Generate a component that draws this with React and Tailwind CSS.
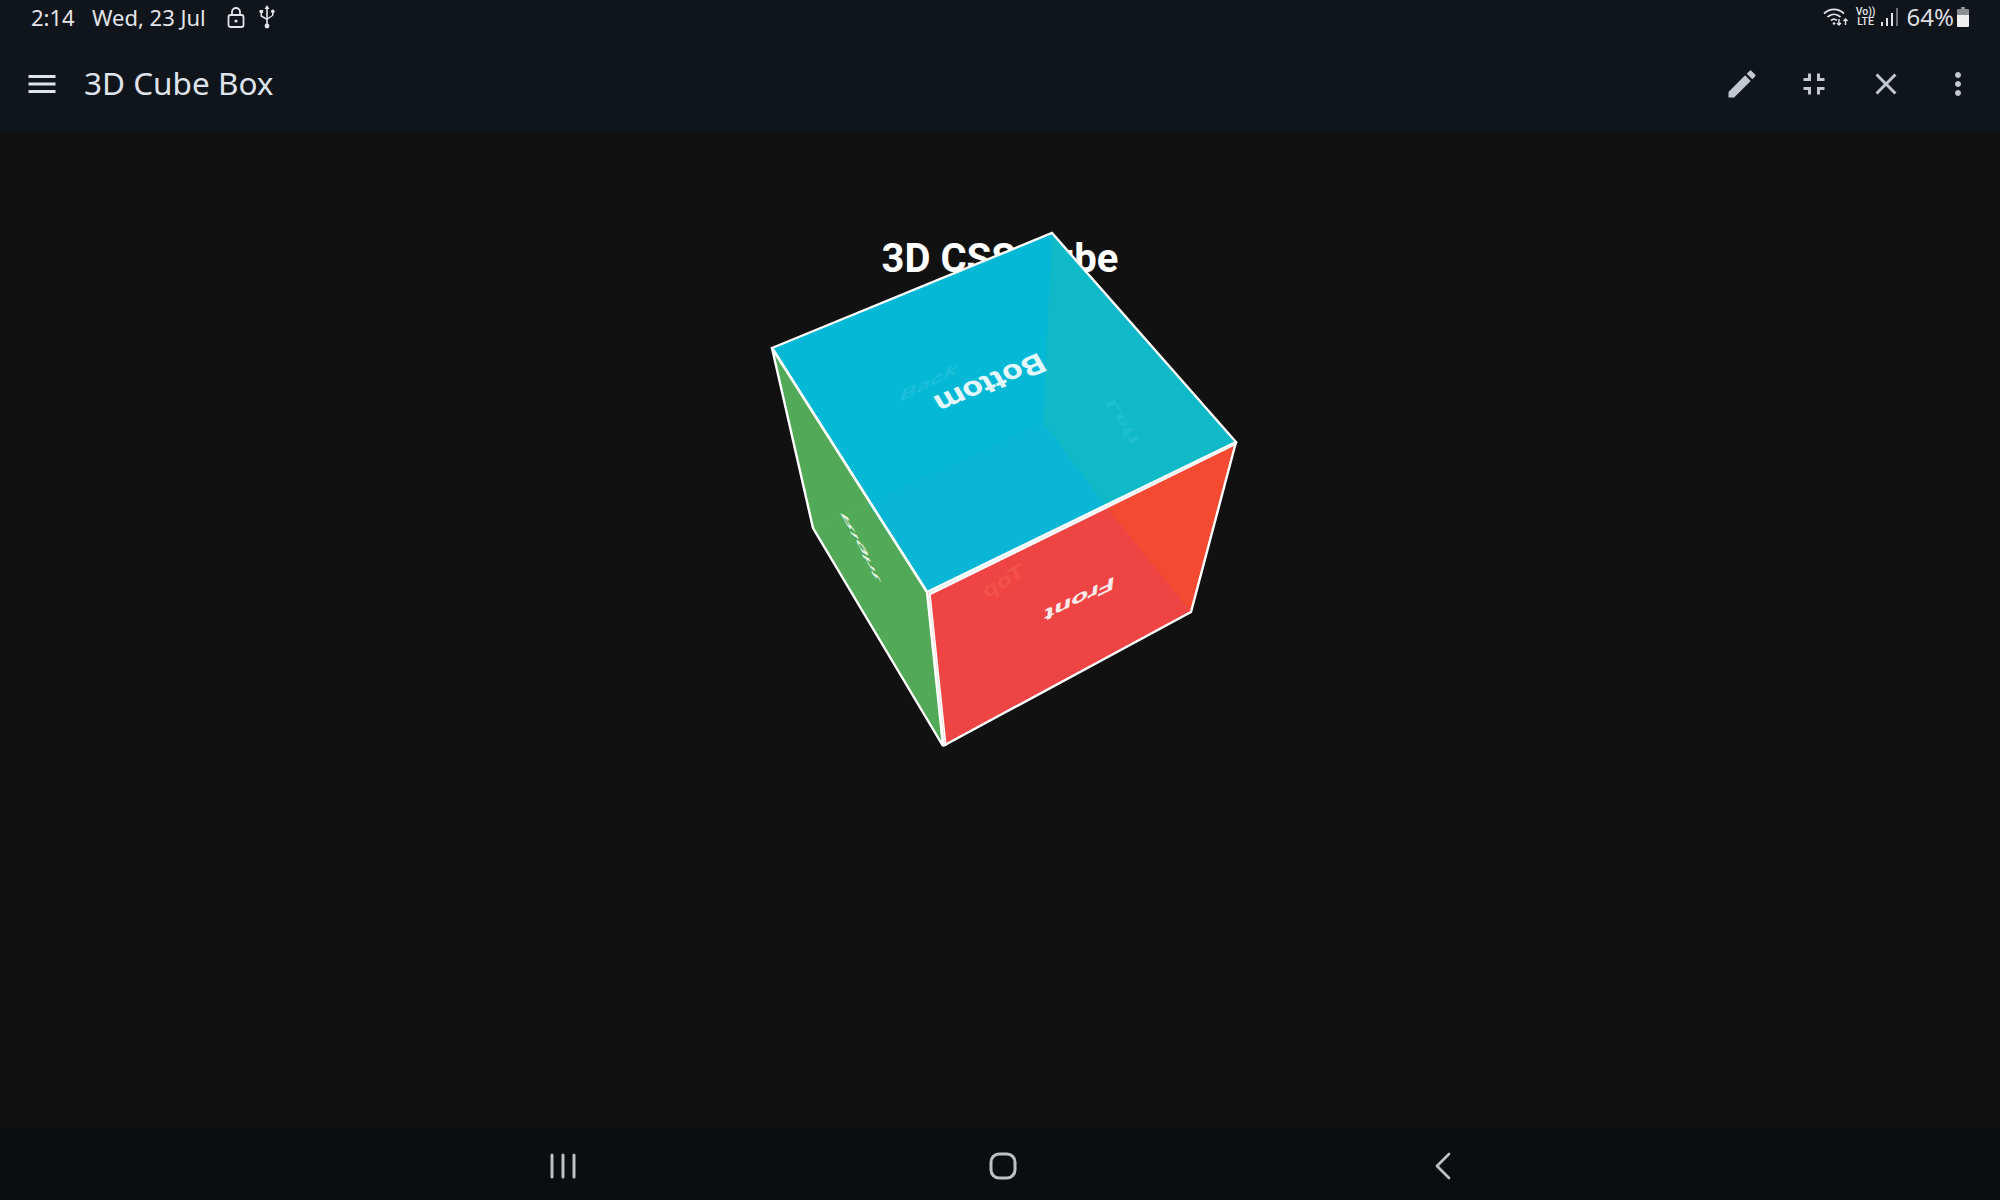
import React from 'react';

const L = '772,348';
const T = '1052,233';
const R = '1236,442';
const N = '927,592';
const B = '943,746';
const LR = '1191,612';
const LL = '813,528';
const I = '1043,422';
const X1 = '868,503';
const X2 = '1107,508';

const MaterialIcon = ({ d, className = 'w-9 h-9' }) => (
  <svg viewBox="0 0 24 24" className={className} fill="currentColor">
    <path d={d} />
  </svg>
);

const ToolButton = ({ d }) => (
  <button className="w-[72px] h-[96px] flex items-center justify-center text-[#c3c7d0]">
    <MaterialIcon d={d} />
  </button>
);

// Text on a cube face, m is the affine matrix of that face
const FaceText = ({ m, fill, opacity = 1, children, weight = 700 }) => (
  <text
    transform={`matrix(${m.join(' ')})`}
    fill={fill}
    fillOpacity={opacity}
    textAnchor="middle"
    fontFamily="Roboto, sans-serif"
    fontWeight={weight}
    fontSize="20"
  >
    {children}
  </text>
);

const Cube = () => (
  <svg viewBox="760 220 490 540" className="absolute left-[760px] top-[88px] w-[490px] h-[540px]">
    <polygon points={`${L} ${N} ${B} ${LL}`} fill="#52a957" />
    <polygon points={`${N} ${R} ${LR} ${B}`} fill="#ef4444" />
    <polygon points={`${X2} ${R} ${LR}`} fill="#f44a32" />

    {/* bottom face, with the faces behind it showing through */}
    <polygon points={`${L} ${T} ${R} ${N}`} fill="#05b8d5" />
    <polygon points={`${I} ${X2} ${N} ${X1}`} fill="#09b6d6" />
    <polygon points={`${T} ${R} ${X2} ${I}`} fill="#0fb9c8" />
    <line x1="868" y1="503" x2="813" y2="528" stroke="#5aae5c" strokeWidth="1" />

    <FaceText m={[-1.62, 0.68, -0.72, -1.22, 985, 375]} fill="#e4f8fb">Bottom</FaceText>
    <FaceText m={[1.3, -0.65, -0.3, 0.85, 927, 388]} fill="#2cc6e0" opacity={0.55}>Back</FaceText>
    <FaceText m={[0.75, 1.22, 0.7, -0.3, 1127, 420]} fill="#2bc4d6" opacity={0.55}>Left</FaceText>
    <FaceText m={[-1.5, 0.72, 0.1, -0.9, 1080, 593]} fill="#fdeaea">Front</FaceText>
    <FaceText m={[-1.2, 0.7, 0.35, 0.9, 1006, 587]} fill="#f4554c" opacity={0.85}>Top</FaceText>
    <FaceText m={[0.75, 1.44, 0.5, 0.3, 864, 549]} fill="#e8f5e9" weight={500}>Right</FaceText>

    {/* edges */}
    <g fill="none" stroke="#ffffff" strokeWidth="2.4" strokeLinejoin="miter">
      <polygon points={`${L} ${T} ${R} ${N}`} />
      <polygon points={`${L} ${LL} ${B} ${N}`} />
      <polyline points={`${R} ${LR} ${B}`} />
    </g>
    <line x1="929" y1="594" x2="1236" y2="443" stroke="#ffffff" strokeWidth="3.6" />
    <line x1="929" y1="593" x2="1236" y2="443" stroke="#d2e6e8" strokeWidth="0.7" />
    <line x1="929" y1="594" x2="945" y2="746" stroke="#ffffff" strokeWidth="3.4" />
    <line x1="929" y1="594" x2="945" y2="746" stroke="#f2d6cf" strokeWidth="0.8" />
  </svg>
);

const StatusBar = () => (
  <div className="h-[36px] flex items-center justify-between pb-[2px] pl-[31px] pr-[31px] text-[#e3e4e8] text-[22px] font-['Noto_Sans',sans-serif]">
    <div className="flex items-center">
      <span className="w-[61px]">2:14</span>
      <span className="w-[135px]">Wed, 23 Jul</span>
      <svg viewBox="0 0 18 22" className="w-[18px] h-[22px]" fill="none" stroke="currentColor" strokeWidth="1.8">
        <rect x="1.5" y="9" width="15" height="12" rx="2" />
        <path d="M5 9V6a4 4 0 0 1 8 0v3" />
        <circle cx="9" cy="15" r="1.6" fill="currentColor" stroke="none" />
      </svg>
      <svg viewBox="0 0 16 24" className="w-[16px] h-[24px] ml-[14px]" fill="currentColor">
        <path d="M8 0 5.5 4h5z" />
        <rect x="7.2" y="3" width="1.6" height="18" />
        <circle cx="8" cy="21" r="2.4" />
        <path d="M1.5 7v4.5l6 3.5v-1.8L3 10.5V7z" />
        <path d="M14.5 7v3.5L8 15v-1.8l5-3V7z" />
        <rect x="0.5" y="5" width="3.6" height="3" />
        <circle cx="13.8" cy="6.4" r="1.8" />
      </svg>
    </div>
    <div className="flex items-center">
      <svg viewBox="0 0 26 20" className="w-[26px] h-[20px]" fill="none" stroke="currentColor" strokeWidth="1.7">
        <path d="M1 6.5C7 1 15 1 21 6.5" />
        <path d="M4.5 10C8.5 6.5 13.5 6.5 17.5 10" />
        <path d="M8 13.5c2-1.7 4-1.7 6 0" />
        <circle cx="11" cy="16.5" r="1.3" fill="currentColor" stroke="none" />
        <path d="M16 12v6m-2-2 2 2 2-2" strokeWidth="1.4" />
        <path d="M22.5 18v-6m-2 2 2-2 2 2" strokeWidth="1.4" />
      </svg>
      <span className="ml-[7px] w-[20px] flex flex-col items-center text-[10.5px] leading-[10px] font-medium font-['Roboto',sans-serif]">
        <span>Vo))</span>
        <span>LTE</span>
      </span>
      <svg viewBox="0 0 17 18" className="w-[17px] h-[18px] ml-[5px]" fill="currentColor">
        <rect x="0" y="14" width="2" height="4" />
        <rect x="5" y="10" width="2" height="8" />
        <rect x="10" y="5" width="2" height="13" />
        <rect x="15" y="0" width="2" height="18" fillOpacity="0.45" />
      </svg>
      <span className="ml-[9px] text-[24px] leading-[30px] text-[#dcdde1]">64%</span>
      <svg viewBox="0 0 12 20" className="w-[12px] h-[20px] ml-[3px]">
        <path d="M4 0h4v2h3a1 1 0 0 1 1 1v5H0V3a1 1 0 0 1 1-1h3z" fill="#8b8d92" />
        <path d="M0 8h12v11a1 1 0 0 1-1 1H1a1 1 0 0 1-1-1z" fill="#eeeeee" />
      </svg>
    </div>
  </div>
);

const Toolbar = () => (
  <div className="h-[96px] flex items-center justify-between pl-[6px] pr-[6px]">
    <div className="flex items-center">
      <button className="w-[72px] h-[96px] flex items-center justify-center text-[#dfe3ec]">
        <MaterialIcon d="M3 18h18v-2H3v2zm0-5h18v-2H3v2zm0-7v2h18V6H3z" />
      </button>
      <h2 className="ml-[6px] mb-[2px] text-[#dfe3ec] text-[31.5px] font-['Noto_Sans',sans-serif]">3D Cube Box</h2>
    </div>
    <div className="flex items-center">
      <ToolButton d="M3 17.25V21h3.75L17.81 9.94l-3.75-3.75L3 17.25zM20.71 7.04c.39-.39.39-1.02 0-1.41l-2.34-2.34c-.39-.39-1.02-.39-1.41 0l-1.83 1.83 3.75 3.75 1.83-1.83z" />
      <ToolButton d="M5 16h3v3h2v-5H5v2zm3-8H5v2h5V5H8v3zm6 11h2v-3h3v-2h-5v5zm2-11V5h-2v5h5V8h-3z" />
      <ToolButton d="M19 6.41L17.59 5 12 10.59 6.41 5 5 6.41 10.59 12 5 17.59 6.41 19 12 13.41 17.59 19 19 17.59 13.41 12z" />
      <ToolButton d="M12 8c1.1 0 2-.9 2-2s-.9-2-2-2-2 .9-2 2 .9 2 2 2zm0 2c-1.1 0-2 .9-2 2s.9 2 2 2 2-.9 2-2-.9-2-2-2zm0 6c-1.1 0-2 .9-2 2s.9 2 2 2 2-.9 2-2-.9-2-2-2z" />
    </div>
  </div>
);

const NavBar = () => (
  <div className="h-[72px] bg-[#0b0d11] flex items-center justify-center pl-[6px] pt-[3px] text-[#bfc0c2]">
    <div className="w-[440px] flex justify-center">
      <svg viewBox="0 0 26 26" className="w-[26px] h-[26px]" stroke="currentColor" strokeWidth="3" strokeLinecap="round">
        <path d="M2 2v22M13 2v22M24 2v22" />
      </svg>
    </div>
    <div className="w-[440px] flex justify-center">
      <svg viewBox="0 0 28 28" className="w-[28px] h-[28px]" fill="none" stroke="currentColor" strokeWidth="3">
        <rect x="2" y="2" width="24" height="24" rx="8" />
      </svg>
    </div>
    <div className="w-[440px] flex justify-center">
      <svg viewBox="0 0 18 28" className="w-[18px] h-[28px]" fill="none" stroke="currentColor" strokeWidth="2.8" strokeLinecap="round" strokeLinejoin="round">
        <path d="M15 2 3 14l12 12" />
      </svg>
    </div>
  </div>
);

const App = () => {
  return (
    <div className="w-[2000px] h-[1200px] flex flex-col overflow-hidden bg-[#111111]">
      <header className="bg-[#10141b]">
        <StatusBar />
        <Toolbar />
      </header>
      <main className="relative flex-1 pt-[103px]">
        <h1 className="text-center text-white text-[40px] leading-[48px] font-bold font-['Roboto',sans-serif]">3D CSS Cube</h1>
        <Cube />
      </main>
      <NavBar />
    </div>
  );
};

export default App;
